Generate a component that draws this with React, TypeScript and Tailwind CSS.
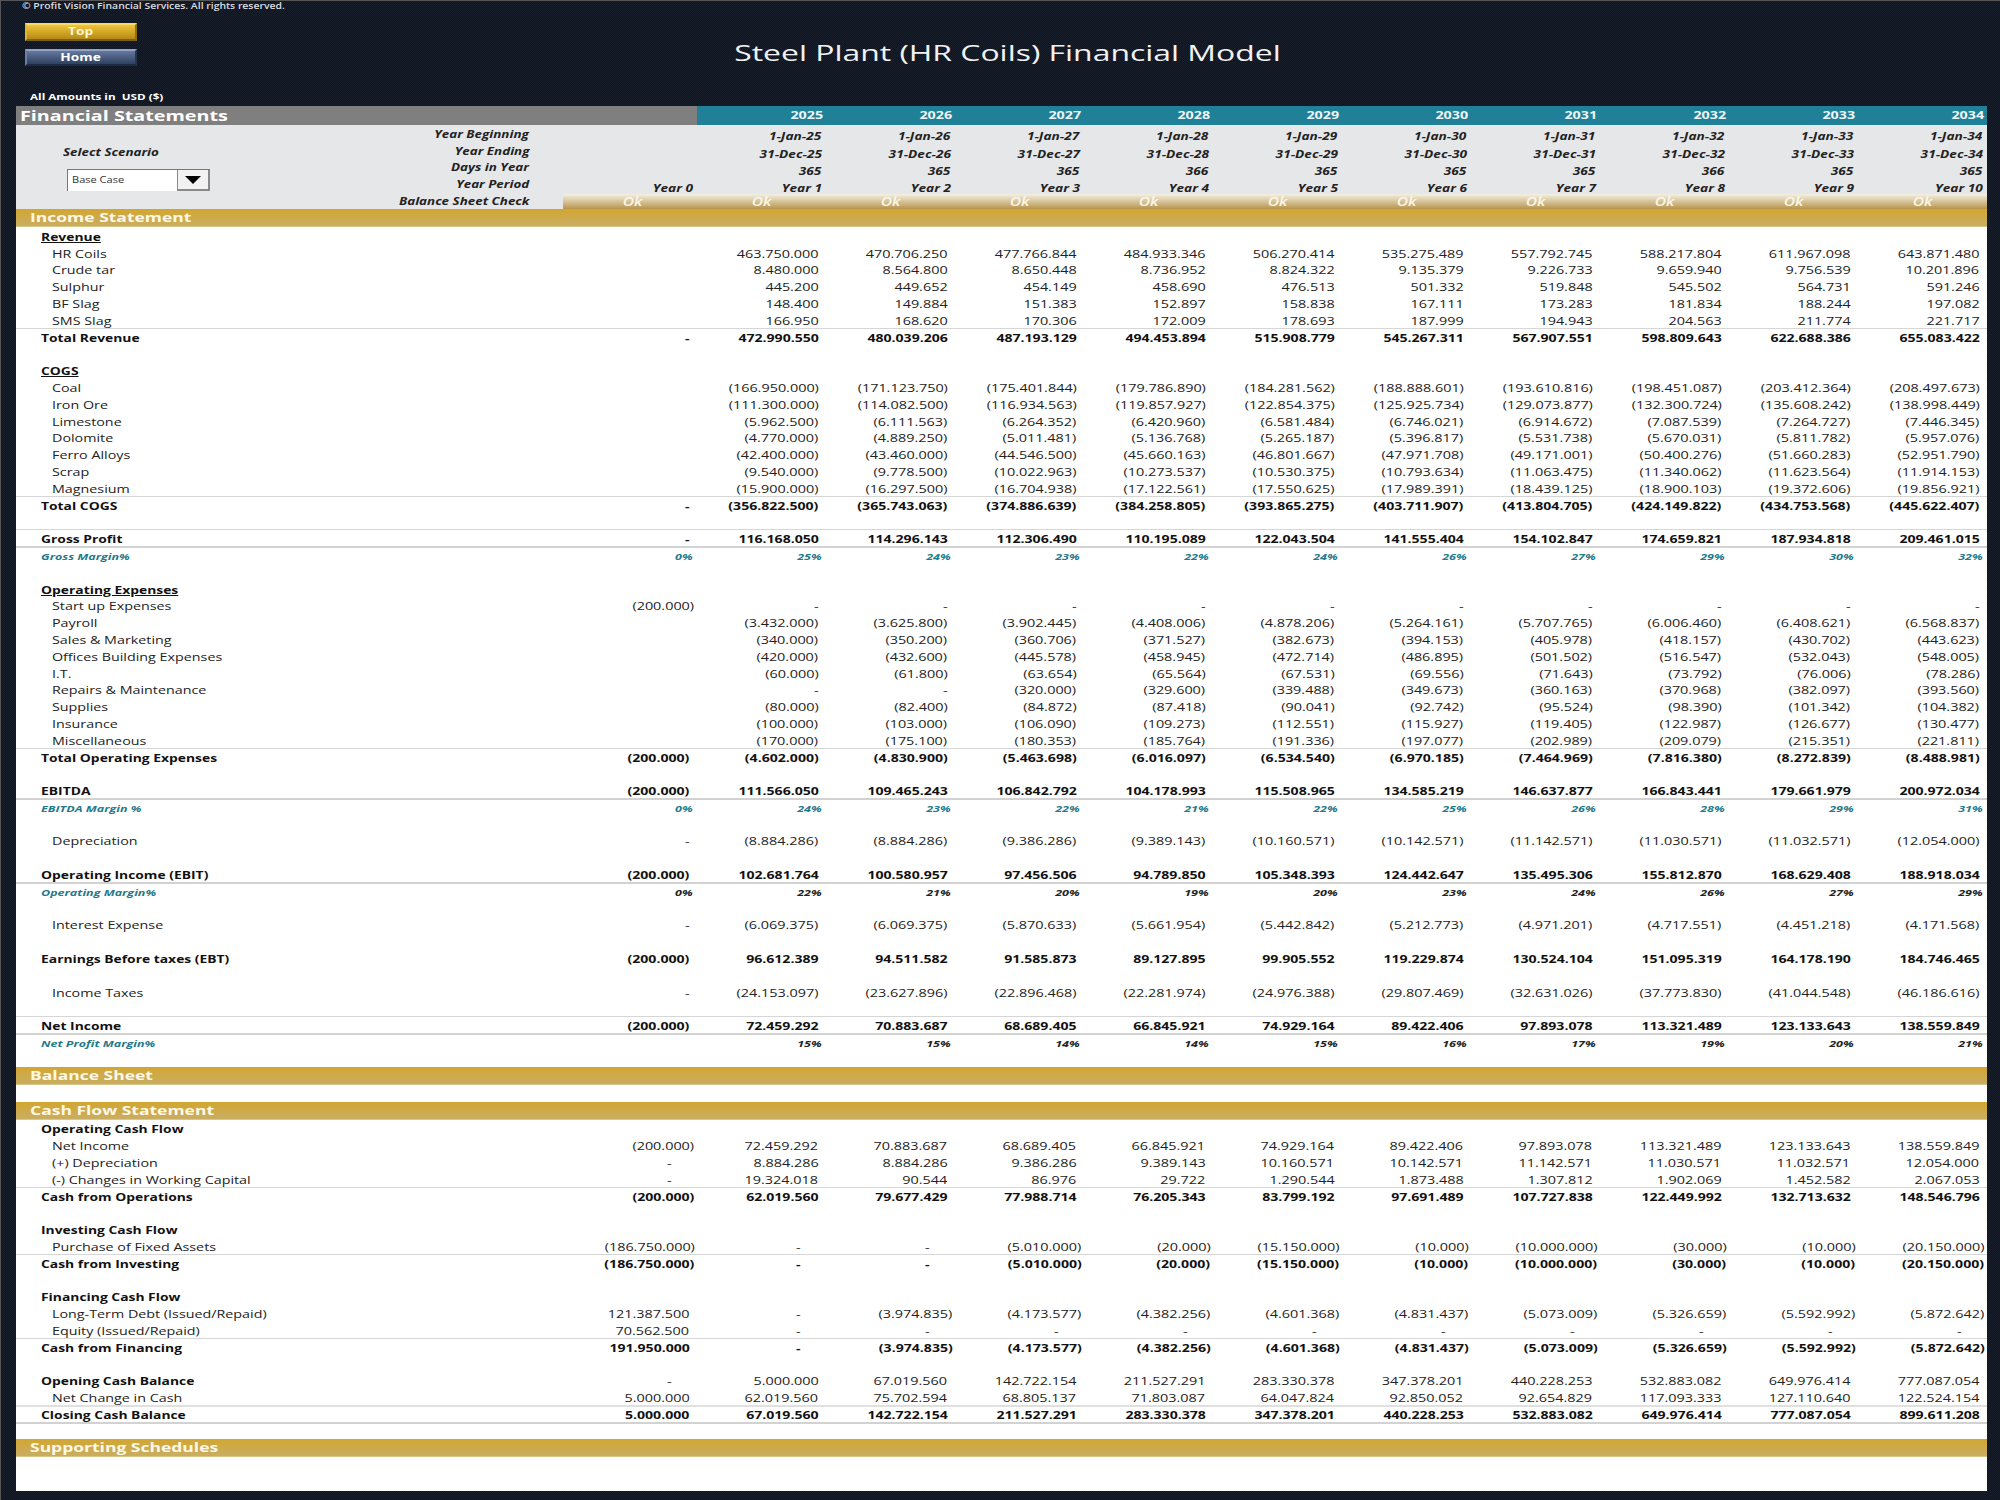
const NUM = ["Year 0"];

type Kind = "blank" | "head" | "sub" | "item" | "total" | "pct" | "pctBlack";
interface Row {
  label?: string;
  kind: Kind;
  vals?: string[];
  top?: boolean; // thin line above
  thickTop?: boolean;
  bottom?: boolean; // thick line below
  overhang?: boolean; // first value sticks out, like the start up row
}

const BLANK: Row = { kind: "blank" };

const income: Row[] = [
  { label: "Revenue", kind: "head" },
  { label: "HR Coils", kind: "item", vals: ["", "463.750.000", "470.706.250", "477.766.844", "484.933.346", "506.270.414", "535.275.489", "557.792.745", "588.217.804", "611.967.098", "643.871.480"] },
  { label: "Crude tar", kind: "item", vals: ["", "8.480.000", "8.564.800", "8.650.448", "8.736.952", "8.824.322", "9.135.379", "9.226.733", "9.659.940", "9.756.539", "10.201.896"] },
  { label: "Sulphur", kind: "item", vals: ["", "445.200", "449.652", "454.149", "458.690", "476.513", "501.332", "519.848", "545.502", "564.731", "591.246"] },
  { label: "BF Slag", kind: "item", vals: ["", "148.400", "149.884", "151.383", "152.897", "158.838", "167.111", "173.283", "181.834", "188.244", "197.082"] },
  { label: "SMS Slag", kind: "item", vals: ["", "166.950", "168.620", "170.306", "172.009", "178.693", "187.999", "194.943", "204.563", "211.774", "221.717"] },
  { label: "Total Revenue", kind: "total", top: true, vals: ["-", "472.990.550", "480.039.206", "487.193.129", "494.453.894", "515.908.779", "545.267.311", "567.907.551", "598.809.643", "622.688.386", "655.083.422"] },
  BLANK,
  { label: "COGS", kind: "head" },
  { label: "Coal", kind: "item", vals: ["", "(166.950.000)", "(171.123.750)", "(175.401.844)", "(179.786.890)", "(184.281.562)", "(188.888.601)", "(193.610.816)", "(198.451.087)", "(203.412.364)", "(208.497.673)"] },
  { label: "Iron Ore", kind: "item", vals: ["", "(111.300.000)", "(114.082.500)", "(116.934.563)", "(119.857.927)", "(122.854.375)", "(125.925.734)", "(129.073.877)", "(132.300.724)", "(135.608.242)", "(138.998.449)"] },
  { label: "Limestone", kind: "item", vals: ["", "(5.962.500)", "(6.111.563)", "(6.264.352)", "(6.420.960)", "(6.581.484)", "(6.746.021)", "(6.914.672)", "(7.087.539)", "(7.264.727)", "(7.446.345)"] },
  { label: "Dolomite", kind: "item", vals: ["", "(4.770.000)", "(4.889.250)", "(5.011.481)", "(5.136.768)", "(5.265.187)", "(5.396.817)", "(5.531.738)", "(5.670.031)", "(5.811.782)", "(5.957.076)"] },
  { label: "Ferro Alloys", kind: "item", vals: ["", "(42.400.000)", "(43.460.000)", "(44.546.500)", "(45.660.163)", "(46.801.667)", "(47.971.708)", "(49.171.001)", "(50.400.276)", "(51.660.283)", "(52.951.790)"] },
  { label: "Scrap", kind: "item", vals: ["", "(9.540.000)", "(9.778.500)", "(10.022.963)", "(10.273.537)", "(10.530.375)", "(10.793.634)", "(11.063.475)", "(11.340.062)", "(11.623.564)", "(11.914.153)"] },
  { label: "Magnesium", kind: "item", vals: ["", "(15.900.000)", "(16.297.500)", "(16.704.938)", "(17.122.561)", "(17.550.625)", "(17.989.391)", "(18.439.125)", "(18.900.103)", "(19.372.606)", "(19.856.921)"] },
  { label: "Total COGS", kind: "total", top: true, vals: ["-", "(356.822.500)", "(365.743.063)", "(374.886.639)", "(384.258.805)", "(393.865.275)", "(403.711.907)", "(413.804.705)", "(424.149.822)", "(434.753.568)", "(445.622.407)"] },
  BLANK,
  { label: "Gross Profit", kind: "total", top: true, bottom: true, vals: ["-", "116.168.050", "114.296.143", "112.306.490", "110.195.089", "122.043.504", "141.555.404", "154.102.847", "174.659.821", "187.934.818", "209.461.015"] },
  { label: "Gross Margin%", kind: "pct", vals: ["0%", "25%", "24%", "23%", "22%", "24%", "26%", "27%", "29%", "30%", "32%"] },
  BLANK,
  { label: "Operating Expenses", kind: "head" },
  { label: "Start up Expenses", kind: "item", overhang: true, vals: ["(200.000)", "-", "-", "-", "-", "-", "-", "-", "-", "-", "-"] },
  { label: "Payroll", kind: "item", vals: ["", "(3.432.000)", "(3.625.800)", "(3.902.445)", "(4.408.006)", "(4.878.206)", "(5.264.161)", "(5.707.765)", "(6.006.460)", "(6.408.621)", "(6.568.837)"] },
  { label: "Sales & Marketing", kind: "item", vals: ["", "(340.000)", "(350.200)", "(360.706)", "(371.527)", "(382.673)", "(394.153)", "(405.978)", "(418.157)", "(430.702)", "(443.623)"] },
  { label: "Offices Building Expenses", kind: "item", vals: ["", "(420.000)", "(432.600)", "(445.578)", "(458.945)", "(472.714)", "(486.895)", "(501.502)", "(516.547)", "(532.043)", "(548.005)"] },
  { label: "I.T.", kind: "item", vals: ["", "(60.000)", "(61.800)", "(63.654)", "(65.564)", "(67.531)", "(69.556)", "(71.643)", "(73.792)", "(76.006)", "(78.286)"] },
  { label: "Repairs & Maintenance", kind: "item", vals: ["", "-", "-", "(320.000)", "(329.600)", "(339.488)", "(349.673)", "(360.163)", "(370.968)", "(382.097)", "(393.560)"] },
  { label: "Supplies", kind: "item", vals: ["", "(80.000)", "(82.400)", "(84.872)", "(87.418)", "(90.041)", "(92.742)", "(95.524)", "(98.390)", "(101.342)", "(104.382)"] },
  { label: "Insurance", kind: "item", vals: ["", "(100.000)", "(103.000)", "(106.090)", "(109.273)", "(112.551)", "(115.927)", "(119.405)", "(122.987)", "(126.677)", "(130.477)"] },
  { label: "Miscellaneous", kind: "item", vals: ["", "(170.000)", "(175.100)", "(180.353)", "(185.764)", "(191.336)", "(197.077)", "(202.989)", "(209.079)", "(215.351)", "(221.811)"] },
  { label: "Total Operating Expenses", kind: "total", top: true, vals: ["(200.000)", "(4.602.000)", "(4.830.900)", "(5.463.698)", "(6.016.097)", "(6.534.540)", "(6.970.185)", "(7.464.969)", "(7.816.380)", "(8.272.839)", "(8.488.981)"] },
  BLANK,
  { label: "EBITDA", kind: "total", bottom: true, vals: ["(200.000)", "111.566.050", "109.465.243", "106.842.792", "104.178.993", "115.508.965", "134.585.219", "146.637.877", "166.843.441", "179.661.979", "200.972.034"] },
  { label: "EBITDA Margin %", kind: "pct", vals: ["0%", "24%", "23%", "22%", "21%", "22%", "25%", "26%", "28%", "29%", "31%"] },
  BLANK,
  { label: "Depreciation", kind: "item", vals: ["-", "(8.884.286)", "(8.884.286)", "(9.386.286)", "(9.389.143)", "(10.160.571)", "(10.142.571)", "(11.142.571)", "(11.030.571)", "(11.032.571)", "(12.054.000)"] },
  BLANK,
  { label: "Operating Income (EBIT)", kind: "total", bottom: true, vals: ["(200.000)", "102.681.764", "100.580.957", "97.456.506", "94.789.850", "105.348.393", "124.442.647", "135.495.306", "155.812.870", "168.629.408", "188.918.034"] },
  { label: "Operating Margin%", kind: "pctBlack", vals: ["0%", "22%", "21%", "20%", "19%", "20%", "23%", "24%", "26%", "27%", "29%"] },
  BLANK,
  { label: "Interest Expense", kind: "item", vals: ["-", "(6.069.375)", "(6.069.375)", "(5.870.633)", "(5.661.954)", "(5.442.842)", "(5.212.773)", "(4.971.201)", "(4.717.551)", "(4.451.218)", "(4.171.568)"] },
  BLANK,
  { label: "Earnings Before taxes (EBT)", kind: "total", vals: ["(200.000)", "96.612.389", "94.511.582", "91.585.873", "89.127.895", "99.905.552", "119.229.874", "130.524.104", "151.095.319", "164.178.190", "184.746.465"] },
  BLANK,
  { label: "Income Taxes", kind: "item", vals: ["-", "(24.153.097)", "(23.627.896)", "(22.896.468)", "(22.281.974)", "(24.976.388)", "(29.807.469)", "(32.631.026)", "(37.773.830)", "(41.044.548)", "(46.186.616)"] },
  BLANK,
  { label: "Net Income", kind: "total", top: true, bottom: true, vals: ["(200.000)", "72.459.292", "70.883.687", "68.689.405", "66.845.921", "74.929.164", "89.422.406", "97.893.078", "113.321.489", "123.133.643", "138.559.849"] },
  { label: "Net Profit Margin%", kind: "pctBlack", vals: ["", "15%", "15%", "14%", "14%", "15%", "16%", "17%", "19%", "20%", "21%"] },
  BLANK,
];

const cash: Row[] = [
  { label: "Operating Cash Flow", kind: "sub" },
  { label: "Net Income", kind: "item", vals: ["(200.000)", "72.459.292", "70.883.687", "68.689.405", "66.845.921", "74.929.164", "89.422.406", "97.893.078", "113.321.489", "123.133.643", "138.559.849"] },
  { label: "(+) Depreciation", kind: "item", vals: ["-", "8.884.286", "8.884.286", "9.386.286", "9.389.143", "10.160.571", "10.142.571", "11.142.571", "11.030.571", "11.032.571", "12.054.000"] },
  { label: "(-) Changes in Working Capital", kind: "item", vals: ["-", "19.324.018", "90.544", "86.976", "29.722", "1.290.544", "1.873.488", "1.307.812", "1.902.069", "1.452.582", "2.067.053"] },
  { label: "Cash from Operations", kind: "total", top: true, vals: ["(200.000)", "62.019.560", "79.677.429", "77.988.714", "76.205.343", "83.799.192", "97.691.489", "107.727.838", "122.449.992", "132.713.632", "148.546.796"] },
  BLANK,
  { label: "Investing Cash Flow", kind: "sub" },
  { label: "Purchase of Fixed Assets", kind: "item", vals: ["(186.750.000)", "-", "-", "(5.010.000)", "(20.000)", "(15.150.000)", "(10.000)", "(10.000.000)", "(30.000)", "(10.000)", "(20.150.000)"] },
  { label: "Cash from Investing", kind: "total", top: true, vals: ["(186.750.000)", "-", "-", "(5.010.000)", "(20.000)", "(15.150.000)", "(10.000)", "(10.000.000)", "(30.000)", "(10.000)", "(20.150.000)"] },
  BLANK,
  { label: "Financing Cash Flow", kind: "sub" },
  { label: "Long-Term Debt (Issued/Repaid)", kind: "item", vals: ["121.387.500", "-", "(3.974.835)", "(4.173.577)", "(4.382.256)", "(4.601.368)", "(4.831.437)", "(5.073.009)", "(5.326.659)", "(5.592.992)", "(5.872.642)"] },
  { label: "Equity (Issued/Repaid)", kind: "item", vals: ["70.562.500", "-", "-", "-", "-", "-", "-", "-", "-", "-", "-"] },
  { label: "Cash from Financing", kind: "total", top: true, vals: ["191.950.000", "-", "(3.974.835)", "(4.173.577)", "(4.382.256)", "(4.601.368)", "(4.831.437)", "(5.073.009)", "(5.326.659)", "(5.592.992)", "(5.872.642)"] },
  BLANK,
  { label: "Opening Cash Balance", kind: "sub", vals: ["-", "5.000.000", "67.019.560", "142.722.154", "211.527.291", "283.330.378", "347.378.201", "440.228.253", "532.883.082", "649.976.414", "777.087.054"] },
  { label: "Net Change in Cash", kind: "item", vals: ["5.000.000", "62.019.560", "75.702.594", "68.805.137", "71.803.087", "64.047.824", "92.850.052", "92.654.829", "117.093.333", "127.110.640", "122.524.154"] },
  { label: "Closing Cash Balance", kind: "total", thickTop: true, bottom: true, vals: ["5.000.000", "67.019.560", "142.722.154", "211.527.291", "283.330.378", "347.378.201", "440.228.253", "532.883.082", "649.976.414", "777.087.054", "899.611.208"] },
  BLANK,
];

const years = ["2025", "2026", "2027", "2028", "2029", "2030", "2031", "2032", "2033", "2034"];
const begins = years.map((y) => `1-Jan-${y.slice(2)}`);
const ends = years.map((y) => `31-Dec-${y.slice(2)}`);
const days = ["365", "365", "365", "366", "365", "365", "365", "366", "365", "365"];
const periods = [...NUM, ...years.map((_, i) => `Year ${i + 1}`)];

// the sheet in the picture is stretched sideways, so the text gets the same stretch
function L({ children, className = "scale-x-[1.3]" }: { children: React.ReactNode; className?: string }) {
  return <span className={`inline-block origin-left whitespace-nowrap ${className}`}>{children}</span>;
}
function R({ children, className = "scale-x-[1.3]" }: { children: React.ReactNode; className?: string }) {
  return <span className={`inline-block origin-right whitespace-nowrap ${className}`}>{children}</span>;
}

function cellPad(v: string, row: Row, isCash: boolean) {
  if (row.kind === "pct" || row.kind === "pctBlack") return "pr-[4.5px]";
  if (v.startsWith("(") && (isCash || row.overhang)) return "pr-[2.5px]";
  if (v === "-" && isCash) return "pr-[25px]";
  return "pr-[7.5px]";
}

function SheetRow({ row, isCash = false }: { row: Row; isCash?: boolean }) {
  const borders = [
    row.top ? "border-t border-[#d6d6d6]" : "",
    row.thickTop ? "border-t-2 border-[#e0e0e0]" : "",
    row.bottom ? "shadow-[0_2px_0_#d2d2d2]" : "",
  ].join(" ");

  if (row.kind === "blank") return <div className="h-[16.8px]" />;

  const isPct = row.kind === "pct" || row.kind === "pctBlack";
  let labelCls = "pl-[25px] font-bold text-[11px] text-[#111]";
  let labelScale = "scale-x-[1.26]";
  if (row.kind === "head") labelScale = "scale-x-[1.26] underline";
  if (row.kind === "item") {
    labelCls = "pl-[36px] text-[11px] text-[#222]";
    labelScale = "scale-x-[1.3]";
  }
  if (isPct) {
    labelCls = "pl-[25px] font-bold italic text-[9px] text-[#1f7a8c]";
    labelScale = "scale-x-[1.39]";
  }

  let valCls = "text-[11px] text-[#222]";
  let valScale = "scale-x-[1.31]";
  if (row.kind === "total") valCls = "text-[11px] font-bold text-[#111]";
  if (row.kind === "total") valScale = "scale-x-[1.28]";
  if (row.kind === "pct") valCls = "text-[9px] font-bold italic text-[#1f7a8c]";
  if (row.kind === "pctBlack") valCls = "text-[9px] font-bold italic text-[#222]";
  if (isPct) valScale = "scale-x-[1.39]";

  return (
    <div className={`flex h-[16.8px] items-end ${isPct ? "leading-[13px]" : "leading-[15px]"} ${borders}`}>
      <div className={`w-[552px] shrink-0 ${labelCls}`}>
        <L className={labelScale}>{row.label}</L>
      </div>
      {row.vals?.map((v, i) => (
        <div key={i} className={`w-[129px] shrink-0 text-right ${cellPad(v, row, isCash)} ${valCls}`}>
          <R className={valScale}>{v}</R>
        </div>
      ))}
    </div>
  );
}

function GoldBar({ title }: { title: string }) {
  return (
    <div className="flex h-[18px] shrink-0 items-center border-b border-[#d8c889] bg-gradient-to-b from-[#d2a62c] to-[#c9ad60] pt-[1px] pl-[14px] text-[13px] font-bold text-[#fdf8e6]">
      <L className="scale-x-[1.345]">{title}</L>
    </div>
  );
}

function HeadRow({ vals, pad }: { vals: string[]; pad?: boolean }) {
  return (
    <div className="flex h-[17.25px] items-end leading-[11px]">
      {pad && <div className="w-[129px] shrink-0" />}
      {vals.map((v, i) => (
        <div key={i} className="w-[129px] shrink-0 pr-[4.5px] text-right text-[10.5px] font-bold italic text-[#222]">
          <R>{v}</R>
        </div>
      ))}
    </div>
  );
}

export default function App() {
  return (
    <div className="flex h-[1500px] w-[2000px] flex-col bg-[conic-gradient(#10141e_25%,#191e2b_0_50%,#10141e_0_75%,#191e2b_0)] bg-[length:2px_2px] font-['Open_Sans',sans-serif] text-white shadow-[inset_1px_1px_0_#555]">
      {/* top strip with the nav buttons and the model title */}
      <div className="flex h-[106px] shrink-0 overflow-hidden">
        <div className="flex w-[150px] shrink-0 flex-col">
          <div className="h-[12px] pl-[22px] text-[8px] leading-[12px] font-semibold text-[#ddd]">
            <L>© Profit Vision Financial Services. All rights reserved.</L>
          </div>
          <div className="mt-[11px] ml-[25px] flex h-[18px] w-[112px] items-center justify-center border-2 border-t-[#f8dc6a] border-r-[#8f6d12] border-b-[#7a5f10] border-l-[#e0b52e] bg-gradient-to-b from-[#f0c53a] to-[#b58a14] text-[10.5px] font-bold text-[#fff6d0]">
            <span className="inline-block scale-x-[1.3]">Top</span>
          </div>
          <div className="mt-[8px] ml-[25px] flex h-[17px] w-[112px] items-center justify-center border-2 border-t-[#8ea3c6] border-r-[#26364f] border-b-[#1c2a42] border-l-[#6a80a6] bg-gradient-to-b from-[#66799e] to-[#2d4160] text-[10.5px] font-bold text-white">
            <span className="inline-block scale-x-[1.3]">Home</span>
          </div>
          <div className="mt-[24px] pl-[29.5px] text-[9px] leading-[14px] font-bold whitespace-nowrap">
            <L>All Amounts in&nbsp; USD ($)</L>
          </div>
        </div>
        <div className="flex flex-1 items-center justify-center pr-[136px] pb-[2px]">
          <h1 className="inline-block scale-x-[1.45] text-[22px] leading-none font-normal whitespace-nowrap text-[#f2f2f2]">
            Steel Plant (HR Coils) Financial Model
          </h1>
        </div>
      </div>

      {/* the sheet */}
      <div className="ml-[16px] h-[1385px] w-[1971px] shrink-0 overflow-hidden bg-white">
        {/* title bar with years */}
        <div className="flex h-[19px] items-center">
          <div className="flex h-full w-[681px] shrink-0 items-center bg-[#7f7f7f] pl-[4px] text-[14.5px] font-bold">
            <L className="scale-x-[1.36]">Financial Statements</L>
          </div>
          <div className="flex h-full flex-1 items-center bg-[#1f8097] text-[11px] font-bold text-[#eef6f8]">
            {years.map((y) => (
              <div key={y} className="w-[129px] shrink-0 pr-[2.5px] text-right">
                <R>{y}</R>
              </div>
            ))}
          </div>
        </div>

        {/* timeline block */}
        <div className="flex h-[84px] bg-[#e6e7e9]">
          <div className="flex w-[552px] shrink-0 text-[10.3px] leading-[14px] font-bold text-[#222] italic">
            <div className="flex w-[220px] shrink-0 flex-col pt-[20px]">
              <div className="pl-[47px]">
                <L>Select Scenario</L>
              </div>
              <div className="mt-[10px] ml-[51px] flex h-[22px] w-[143px] border-t border-l border-[#777] bg-white">
                <div className="flex-1 pt-[3px] pl-[4px] text-[8.5px] font-normal text-[#333] not-italic">
                  <L>Base Case</L>
                </div>
                <div className="flex w-[33px] items-center justify-center border-r-2 border-b-2 border-l border-[#8a8a8a] bg-[#f2f2f2]">
                  <svg width="16" height="8" viewBox="0 0 16 8">
                    <path d="M0 0h16L8 8z" fill="#000" />
                  </svg>
                </div>
              </div>
            </div>
            <div className="flex flex-1 flex-col items-end pt-[1px] pr-[39px]">
              {["Year Beginning", "Year Ending", "Days in Year", "Year Period", "Balance Sheet Check"].map((t) => (
                <div key={t} className="flex h-[17px] items-center">
                  <R>{t}</R>
                </div>
              ))}
            </div>
          </div>
          <div className="flex flex-1 flex-col">
            <HeadRow pad vals={begins} />
            <HeadRow pad vals={ends} />
            <HeadRow pad vals={days} />
            <HeadRow vals={periods} />
            <div className="-ml-[5px] flex h-[15px] bg-gradient-to-b from-[#f4f1e4] to-[#b8954a] pl-[5px]">
              {periods.map((p) => (
                <div key={p} className="flex w-[129px] shrink-0 items-center justify-center text-[12px] font-semibold text-[#fbf7e8] italic">
                  <span className="inline-block scale-x-[1.3]">Ok</span>
                </div>
              ))}
            </div>
          </div>
        </div>

        <GoldBar title="Income Statement" />
        {income.map((r, i) => (
          <SheetRow key={i} row={r} />
        ))}
        <GoldBar title="Balance Sheet" />
        <div className="h-[16.8px]" />
        <GoldBar title="Cash Flow Statement" />
        {cash.map((r, i) => (
          <SheetRow key={i} row={r} isCash />
        ))}
        <GoldBar title="Supporting Schedules" />
      </div>
    </div>
  );
}
